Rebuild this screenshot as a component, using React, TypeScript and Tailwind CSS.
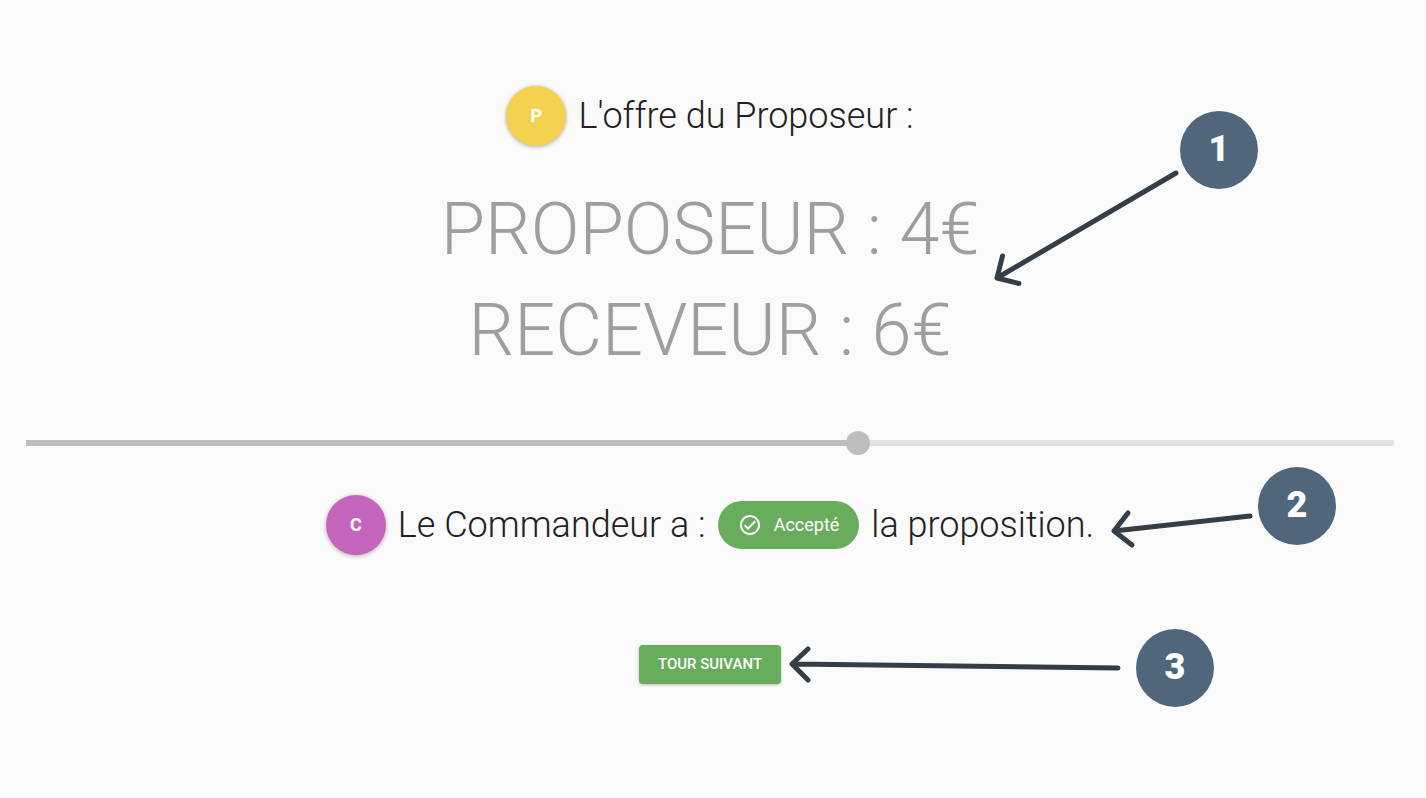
import { useState } from "react";
import type { CSSProperties } from "react";

type AvatarProps = { letter: string; color: string };

function Avatar({ letter, color }: AvatarProps) {
  return (
    <span
      className={`flex size-15 shrink-0 items-center justify-center rounded-full text-lg font-bold text-white shadow-[0_1px_4px_rgba(0,0,0,0.3)] ${color}`}
    >
      {letter}
    </span>
  );
}

function CheckCircle() {
  return (
    <svg viewBox="0 0 24 24" className="size-6" fill="currentColor" aria-hidden="true">
      <path d="M12 2C6.5 2 2 6.5 2 12S6.5 22 12 22 22 17.5 22 12 17.5 2 12 2M12 20C7.59 20 4 16.41 4 12S7.59 4 12 4 20 7.59 20 12 16.41 20 12 20M16.59 7.58L10 14.17L7.41 11.59L6 13L10 17L18 9L16.59 7.58Z" />
    </svg>
  );
}

function Marker({ value, place }: { value: number; place: string }) {
  return (
    <span
      className={`absolute flex size-[78px] items-center justify-center rounded-full bg-[#50667b] pb-0.5 text-4xl font-black text-white ${place}`}
    >
      {value}
    </span>
  );
}

function Annotations() {
  return (
    <div className="pointer-events-none absolute top-0 left-1/2">
      <svg
        width="640"
        height="760"
        viewBox="0 0 640 760"
        className="max-w-none"
        fill="none"
        stroke="#353d47"
        strokeWidth="5"
        strokeLinecap="round"
        strokeLinejoin="round"
        aria-hidden="true"
      >
        <path d="M463 173L284 278M289.500 256L284 278L306 283.500" />
        <path d="M537 516L401 531M415 513L401 531L419 545" />
        <path d="M405 668L79 664M95 649L79 664L95 680" />
      </svg>
      <Marker value={1} place="top-[111px] left-[467px]" />
      <Marker value={2} place="top-[467px] left-[545px]" />
      <Marker value={3} place="top-[629px] left-[423px]" />
    </div>
  );
}

export default function App() {
  const [share, setShare] = useState(61);
  return (
    <main className="relative min-h-screen overflow-hidden bg-[#fafafa] pt-[86px] pr-8 pb-12 pl-[26px] font-[Roboto,sans-serif] text-[#212121]">
      <h1 className="flex items-center justify-center gap-3 text-4xl font-light">
        <Avatar letter="P" color="bg-[#f4d150]" />
        L'offre du Proposeur :
      </h1>

      <div className="mt-[33px] text-center text-7xl leading-[101px] font-light text-[#9e9e9e]">
        <p>PROPOSEUR : 4€</p>
        <p>RECEVEUR : 6€</p>
      </div>

      <input
        type="range"
        min={0}
        max={100}
        value={share}
        onChange={(e) => setShare(Number(e.target.value))}
        aria-label="Partage"
        style={{ "--share": `${share}%` } as CSSProperties}
        className="mt-[50px] block h-6 w-full appearance-none bg-transparent [&::-webkit-slider-runnable-track]:h-[6px] [&::-webkit-slider-runnable-track]:rounded-[1px] [&::-webkit-slider-runnable-track]:bg-[linear-gradient(to_right,#bdbdbd_var(--share),#e2e2e2_var(--share))] [&::-webkit-slider-thumb]:-mt-[9px] [&::-webkit-slider-thumb]:size-6 [&::-webkit-slider-thumb]:appearance-none [&::-webkit-slider-thumb]:rounded-full [&::-webkit-slider-thumb]:bg-[#bdbdbd]"
      />

      <div className="mt-10 flex items-center justify-center gap-3 text-4xl font-light">
        <Avatar letter="C" color="bg-[#c464bb]" />
        <span>Le Commandeur a :</span>
        <span className="flex h-12 items-center gap-3 rounded-full bg-[#67ad5b] px-5 text-lg font-normal text-white">
          <CheckCircle />
          Accepté
        </span>
        <span>la proposition.</span>
      </div>

      <div className="mt-[90px] flex justify-center">
        <button
          type="button"
          className="h-[39px] rounded bg-[#67ad5b] px-[19px] text-[15px] font-medium text-white uppercase shadow-[0_1px_3px_rgba(0,0,0,0.25)]"
        >
          Tour suivant
        </button>
      </div>

      <Annotations />
    </main>
  );
}
